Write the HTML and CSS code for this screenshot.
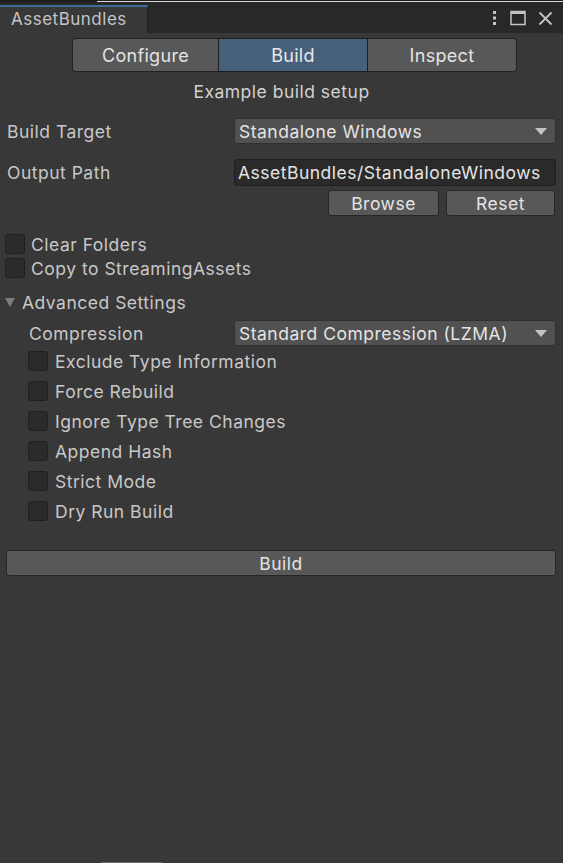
FILE: index.html
```html
<!DOCTYPE html>
<html>
<head>
<meta charset="utf-8">
<link rel="stylesheet" href="styles.css">
</head>
<body>
<div class="window">
  <div class="topstrip"><div class="ts-left"></div><div class="ts-right"></div></div>
  <div class="titlebar">
    <div class="tab">AssetBundles</div>
    <div class="wincontrols">
      <svg width="6" height="16" viewBox="0 0 6 16"><rect x="1" y="1" width="3" height="3" fill="#c4c4c4"/><rect x="1" y="6.5" width="3" height="3" fill="#c4c4c4"/><rect x="1" y="12" width="3" height="3" fill="#c4c4c4"/></svg>
      <svg width="16" height="16" viewBox="0 0 16 16"><rect x="1" y="1.5" width="14" height="13" fill="none" stroke="#c4c4c4" stroke-width="1.5"/><rect x="1" y="1" width="14" height="3" fill="#c4c4c4"/></svg>
      <svg width="15" height="15" viewBox="0 0 15 15"><path d="M1.5 1.5 L13.5 13.5 M13.5 1.5 L1.5 13.5" stroke="#c4c4c4" stroke-width="1.8"/></svg>
    </div>
  </div>
  <div class="content">
    <div class="toolbar">
      <div class="tbtn tb-first">Configure</div>
      <div class="tbtn tb-mid active">Build</div>
      <div class="tbtn tb-last">Inspect</div>
    </div>
    <div class="caption">Example build setup</div>

    <div class="row r-target">
      <div class="label">Build Target</div>
      <div class="dropdown"><span>Standalone Windows</span><span class="arrow"></span></div>
    </div>
    <div class="row r-output">
      <div class="label">Output Path</div>
      <div class="textfield">AssetBundles/StandaloneWindows</div>
    </div>
    <div class="btnrow">
      <div class="btn b-browse">Browse</div>
      <div class="btn b-reset">Reset</div>
    </div>

    <div class="checks top">
      <div class="check"><span class="box"></span><span>Clear Folders</span></div>
      <div class="check"><span class="box"></span><span>Copy to StreamingAssets</span></div>
    </div>

    <div class="foldout"><span class="tri"></span><span>Advanced Settings</span></div>
    <div class="row r-comp">
      <div class="label ind">Compression</div>
      <div class="dropdown"><span>Standard Compression (LZMA)</span><span class="arrow"></span></div>
    </div>
    <div class="checks adv">
      <div class="check"><span class="box"></span><span>Exclude Type Information</span></div>
      <div class="check"><span class="box"></span><span>Force Rebuild</span></div>
      <div class="check"><span class="box"></span><span>Ignore Type Tree Changes</span></div>
      <div class="check"><span class="box"></span><span>Append Hash</span></div>
      <div class="check"><span class="box"></span><span>Strict Mode</span></div>
      <div class="check"><span class="box"></span><span>Dry Run Build</span></div>
    </div>

    <div class="buildbtn">Build</div>
  </div>
  <div class="scrollthumb"></div>
</div>
</body>
</html>
```

FILE: styles.css
```css
* { box-sizing: border-box; }
html, body { margin: 0; padding: 0; }
body {
  width: 563px;
  height: 863px;
  background: #383838;
  font-family: Inter, "Noto Sans", sans-serif;
  font-size: 17.5px;
  letter-spacing: 0.5px;
  color: #c8c8c8;
  overflow: hidden;
}
.window {
  position: relative;
  height: 863px;
  display: flex;
  flex-direction: column;
}
.topstrip {
  display: flex;
  height: 2px;
  background: #1e1e1e;
}
.ts-left { width: 97px; }
.ts-right { flex: 1; height: 1px; background: #d6d6d6; margin-top: 1px; }
.titlebar {
  height: 31px;
  background: #282828;
  display: flex;
  align-items: flex-end;
  justify-content: space-between;
}
.tab {
  width: 148px;
  height: 28px;
  background: #383838;
  border-top: 2px solid #3d6b9a;
  border-right: 1px solid #232323;
  padding-left: 11px;
  font-size: 17px;
  line-height: 25px;
  color: #c4c4c4;
}
.wincontrols {
  align-self: center;
  display: flex;
  align-items: center;
  gap: 12px;
  padding-right: 10px;
  margin-top: 1px;
}
.content {
  flex: 1;
  display: flex;
  flex-direction: column;
}
.toolbar {
  display: flex;
  margin: 5px 0 0 72px;
  height: 34px;
}
.tbtn {
  height: 34px;
  background: #585858;
  border: 1px solid #232323;
  color: #e4e4e4;
  font-size: 18px;
  letter-spacing: 0.3px;
  display: flex;
  align-items: center;
  justify-content: center;
}
.tb-first { width: 146px; border-radius: 4px 0 0 4px; border-right: none; }
.tb-mid { width: 150px; }
.tb-last { width: 149px; border-radius: 0 4px 4px 0; border-left: none; }
.tbtn.active { background: #46607c; color: #e8e8e8; border-color: #1c1c1c; }
.caption {
  text-align: center;
  margin-top: 9px;
  height: 22px;
  line-height: 22px;
  color: #d2d2d2;
}
.row {
  display: flex;
  align-items: center;
  padding: 0 7px;
}
.label {
  width: 227px;
  flex: none;
}
.label.ind { padding-left: 22px; }
.r-target { margin-top: 15px; height: 26px; }
.r-output { margin-top: 15px; height: 27px; }
.r-comp { margin-top: 8px; height: 26px; }
.dropdown {
  flex: 1;
  height: 26px;
  background: #515151;
  border: 1px solid #303030;
  border-radius: 3px;
  display: flex;
  align-items: center;
  justify-content: space-between;
  padding: 0 8px 0 4px;
  color: #e4e4e4;
}
.arrow {
  width: 0; height: 0;
  border-left: 6px solid transparent;
  border-right: 6px solid transparent;
  border-top: 7px solid #c4c4c4;
  margin-top: 1px;
}
.textfield {
  flex: 1;
  height: 27px;
  background: #2a2a2a;
  border: 1px solid #1f1f1f;
  border-radius: 3px;
  padding-left: 3px;
  line-height: 25px;
  color: #e4e4e4;
  white-space: nowrap;
  overflow: hidden;
}
.btnrow {
  display: flex;
  justify-content: flex-end;
  gap: 7px;
  padding-right: 8px;
  margin-top: 4px;
}
.btn {
  height: 26px;
  background: #585858;
  border: 1px solid #262626;
  border-radius: 3px;
  color: #e4e4e4;
  display: flex;
  align-items: center;
  justify-content: center;
}
.b-browse { width: 111px; }
.b-reset { width: 109px; }
.checks {
  display: flex;
  flex-direction: column;
}
.checks.top { margin-top: 18px; padding-left: 5px; gap: 4px; }
.checks.adv { margin-top: 5px; padding-left: 28px; gap: 10px; }
.check {
  display: flex;
  align-items: center;
  gap: 6px;
  height: 20px;
}
.checks.adv .check { gap: 7px; }
.box {
  width: 20px;
  height: 20px;
  background: #2b2b2b;
  border: 1px solid #202020;
  border-radius: 3px;
  flex: none;
}
.foldout {
  display: flex;
  align-items: center;
  gap: 7px;
  padding-left: 5px;
  margin-top: 14px;
  height: 20px;
}
.tri {
  width: 0; height: 0;
  border-left: 5px solid transparent;
  border-right: 5px solid transparent;
  border-top: 9px solid #7e7e7e;
}
.buildbtn {
  margin: 29px 7px 0 6px;
  height: 26px;
  background: #585858;
  border: 1px solid #262626;
  border-radius: 3px;
  color: #e4e4e4;
  display: flex;
  align-items: center;
  justify-content: center;
}
.scrollthumb {
  position: absolute;
  left: 101px;
  bottom: 0;
  width: 61px;
  height: 1px;
  background: #6a6a6a;
}
```
